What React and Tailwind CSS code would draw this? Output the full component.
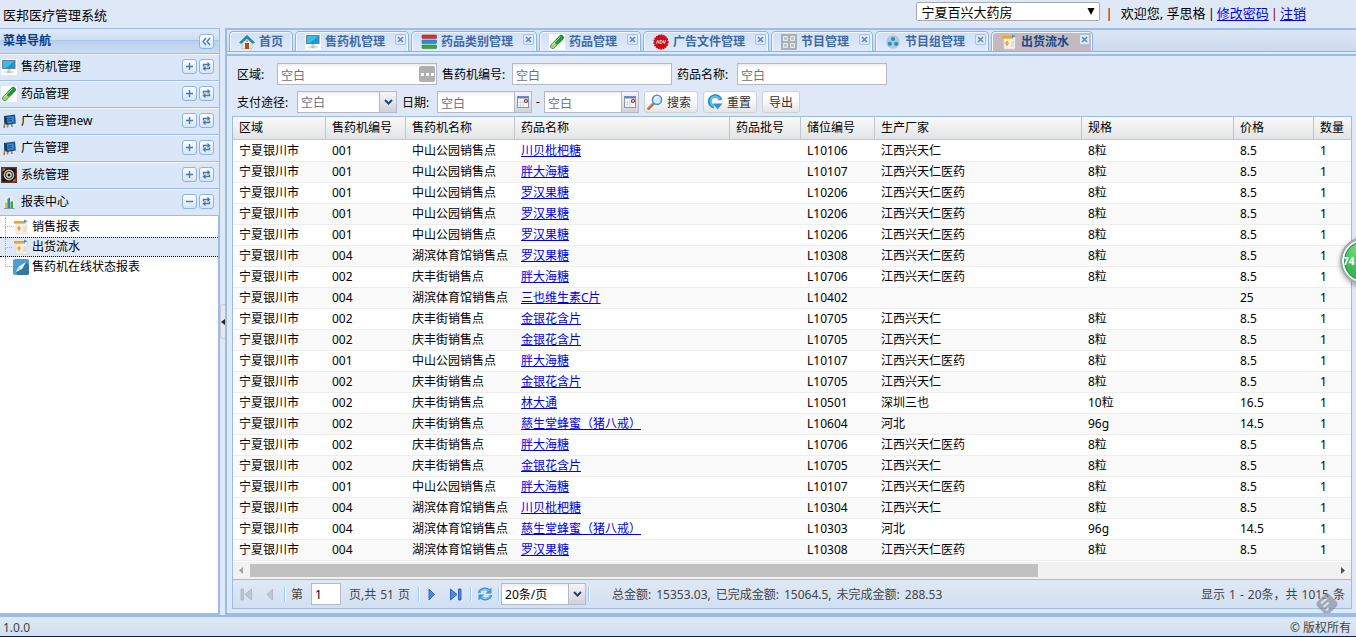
import React, { useState } from 'react';

const menus = [
  { id: 1, name: '售药机管理', icon: 'monitor' },
  { id: 2, name: '药品管理', icon: 'pill' },
  { id: 3, name: '广告管理new', icon: 'board' },
  { id: 4, name: '广告管理', icon: 'board' },
  { id: 5, name: '系统管理', icon: 'gear' },
  { id: 6, name: '报表中心', icon: 'chart', open: true },
];

const reports = [
  { name: '销售报表', icon: 'report' },
  { name: '出货流水', icon: 'report' },
  { name: '售药机在线状态报表', icon: 'pen' },
];

const tabs = [
  { name: '首页', icon: 'home', fixed: true },
  { name: '售药机管理', icon: 'monitor' },
  { name: '药品类别管理', icon: 'bars' },
  { name: '药品管理', icon: 'pill' },
  { name: '广告文件管理', icon: 'adv' },
  { name: '节目管理', icon: 'blocks' },
  { name: '节目组管理', icon: 'group' },
  { name: '出货流水', icon: 'report' },
];

const columns = [
  { title: '区域', width: 'w-[93px]' },
  { title: '售药机编号', width: 'w-[80px]' },
  { title: '售药机名称', width: 'w-[109px]' },
  { title: '药品名称', width: 'w-[215px]' },
  { title: '药品批号', width: 'w-[71px]' },
  { title: '储位编号', width: 'w-[74px]' },
  { title: '生产厂家', width: 'w-[207px]' },
  { title: '规格', width: 'w-[152px]' },
  { title: '价格', width: 'w-[80px]' },
  { title: '数量', width: '' },
];

const machines = {
  zs: ['001', '中山公园销售点'],
  hb: ['004', '湖滨体育馆销售点'],
  qf: ['002', '庆丰街销售点'],
};

const rows = [
  ['zs', '川贝枇杷糖', 'L10106', '江西兴天仁', '8粒', '8.5'],
  ['zs', '胖大海糖', 'L10107', '江西兴天仁医药', '8粒', '8.5'],
  ['zs', '罗汉果糖', 'L10206', '江西兴天仁医药', '8粒', '8.5'],
  ['zs', '罗汉果糖', 'L10206', '江西兴天仁医药', '8粒', '8.5'],
  ['zs', '罗汉果糖', 'L10206', '江西兴天仁医药', '8粒', '8.5'],
  ['hb', '罗汉果糖', 'L10308', '江西兴天仁医药', '8粒', '8.5'],
  ['qf', '胖大海糖', 'L10706', '江西兴天仁医药', '8粒', '8.5'],
  ['hb', '三也维生素C片', 'L10402', '', '', '25'],
  ['qf', '金银花含片', 'L10705', '江西兴天仁', '8粒', '8.5'],
  ['qf', '金银花含片', 'L10705', '江西兴天仁', '8粒', '8.5'],
  ['zs', '胖大海糖', 'L10107', '江西兴天仁医药', '8粒', '8.5'],
  ['qf', '金银花含片', 'L10705', '江西兴天仁', '8粒', '8.5'],
  ['qf', '林大通', 'L10501', '深圳三也', '10粒', '16.5'],
  ['qf', '慈生堂蜂蜜（猪八戒）', 'L10604', '河北', '96g', '14.5'],
  ['qf', '胖大海糖', 'L10706', '江西兴天仁医药', '8粒', '8.5'],
  ['qf', '金银花含片', 'L10705', '江西兴天仁', '8粒', '8.5'],
  ['zs', '胖大海糖', 'L10107', '江西兴天仁医药', '8粒', '8.5'],
  ['hb', '川贝枇杷糖', 'L10304', '江西兴天仁', '8粒', '8.5'],
  ['hb', '慈生堂蜂蜜（猪八戒）', 'L10303', '河北', '96g', '14.5'],
  ['hb', '罗汉果糖', 'L10308', '江西兴天仁医药', '8粒', '8.5'],
];

const Icon = ({ name }) => (
  <svg viewBox="0 0 16 16" className="w-4 h-4 shrink-0" aria-hidden="true">
    {name === 'monitor' && (
      <>
        <rect width="16" height="16" fill="#fdfdfd" />
        <rect x="1" y="1" width="13.5" height="9" rx="0.5" fill="#6d7d8c" />
        <rect x="2" y="2" width="11.5" height="7" fill="#139bd8" />
        <path d="M2 2h11.5L5 9H2z" fill="#35bdec" />
        <rect x="6.5" y="10" width="3" height="2" fill="#c9ced2" />
        <ellipse cx="8" cy="13" rx="5" ry="1.5" fill="#dfe3e6" />
        <ellipse cx="8" cy="13" rx="2" ry="0.8" fill="#a9afb5" />
      </>
    )}
    {name === 'pill' && (
      <>
        <rect width="16" height="16" fill="#fdfdfd" />
        <path d="M3.8 12.2l8.4-8.6" stroke="#2f6d25" strokeWidth="5.2" strokeLinecap="round" />
        <path d="M3.8 12.2L8 8" stroke="#a9cf7c" strokeWidth="4.2" strokeLinecap="round" />
        <path d="M8 8l4.2-4.400" stroke="#1f9a35" strokeWidth="4.600" strokeLinecap="round" />
        <path d="M3.4 10.8l7.600-7.800" stroke="#c9f3c9" strokeWidth="0.800" strokeLinecap="round" />
      </>
    )}
    {name === 'board' && (
      <>
        <path d="M4 10l-1 5M7 10l-.5 4.500M10.500 10l.5 4" stroke="#b77a35" strokeWidth="1.600" />
        <path d="M3 3l11-1.500.8 9-9 1.500L3.500 10z" fill="#1c4f8c" />
        <path d="M6 4l6.500-.8.500 6-6.300 1z" fill="#3e8ed0" />
        <path d="M3 3l2.500 1 .7 6.500-2.700 0z" fill="#163a69" />
        <path d="M7 6l4-.5M7 8l4-.5" stroke="#173d6d" strokeWidth="0.900" />
      </>
    )}
    {name === 'gear' && (
      <>
        <rect width="16" height="16" y="0" fill="#6a3520" />
        <rect x="1.500" y="1.500" width="13" height="13" fill="#15120f" />
        <circle cx="8" cy="8" r="4.600" fill="none" stroke="#c5bdb2" strokeWidth="1.600" />
        <circle cx="8" cy="8" r="2.200" fill="none" stroke="#e5ded5" strokeWidth="1.400" />
        <path d="M1.500 1.500l3.500 0-3.500 3.500zM14.500 14.500l-3.500 0 3.500-3.500z" fill="#b98358" />
      </>
    )}
    {name === 'chart' && (
      <>
        <path d="M3 2h8l2 2v10H3z" fill="#e4ebf2" />
        <path d="M4 14V9l2.500-1v6z" fill="#f2b52c" />
        <path d="M6.500 14V5L9 3.500V14z" fill="#1c87c9" />
        <path d="M9.500 14V8l2.500-1v7z" fill="#45a236" />
        <path d="M3 14.500h10.500" stroke="#6c7f92" strokeWidth="0.800" />
      </>
    )}
    {name === 'report' && (
      <>
        <path d="M3 3h11v12H3z" fill="#f4f1ec" stroke="#dad6cf" strokeWidth="0.600" />
        <rect x="1" y="2" width="11" height="2.600" fill="#f3a024" />
        <path d="M11 0.500l3.500 1.700L11 4z" fill="#3e9cc4" />
        <path d="M4 9l2-2.600L8 9l-2 3.500z" fill="#f0a52c" />
        <path d="M10 8h3M10 10h3M10 12h3" stroke="#ccc7bf" strokeWidth="0.800" />
      </>
    )}
    {name === 'pen' && (
      <>
        <rect width="16" height="16" rx="2" fill="#4a9fd0" />
        <path d="M13 3l3 3v8a2 2 0 0 1-2 2H5l-2-3z" fill="#35789f" />
        <path d="M3 13l2.500-5L13 3 9 10z" fill="#fff" />
        <path d="M5 9l3 2" stroke="#4a9fd0" strokeWidth="0.800" />
      </>
    )}
    {name === 'home' && (
      <>
        <path d="M3 8v6.500h10V8L8 3.500z" fill="#eee6d8" stroke="#b9aa94" strokeWidth="0.500" />
        <path d="M0.500 8.500L8 1.200l7.500 7.300-1.700 1L8 4.600 2.200 9.500z" fill="#1c8fb4" stroke="#106a8c" strokeWidth="0.500" />
        <rect x="6" y="9" width="4" height="6" fill="#a4541c" />
        <circle cx="8" cy="7.200" r="0.900" fill="#b98b5a" />
      </>
    )}
    {name === 'bars' && (
      <>
        <rect x="1" y="1" width="14.500" height="3.400" rx="0.500" fill="#d9302c" stroke="#8d1512" strokeWidth="0.500" />
        <rect x="1" y="6" width="14.500" height="3.400" rx="0.500" fill="#2b93d6" stroke="#12588b" strokeWidth="0.500" />
        <rect x="1" y="11" width="14.500" height="3.400" rx="0.500" fill="#3aa83d" stroke="#1a691d" strokeWidth="0.500" />
      </>
    )}
    {name === 'adv' && (
      <>
        <circle cx="8" cy="8" r="6.900" fill="#cf0d12" />
        <circle cx="8" cy="8" r="7" fill="none" stroke="#cf0d12" strokeWidth="1.400" strokeDasharray="1.500 1" />
        <path d="M3.500 9.500l1.200-3.300 1.200 3.300M7 6.300v3.200c2 0 2.300-.6 2.300-1.600S8.500 6.300 7 6.300M10.200 6.300l1.100 3.200 1.200-3.200" fill="none" stroke="#fff" strokeWidth="0.900" />
      </>
    )}
    {name === 'blocks' && (
      <>
        <rect width="16" height="16" rx="1" fill="#a7b0b8" />
        <path d="M2.500 2.500h4v4h-4zM9.500 2.500h4v4h-4zM2.500 9.500h4v4h-4zM9.500 9.500h4v4h-4z" fill="#bcc4ca" stroke="#e7ebee" strokeWidth="1" />
      </>
    )}
    {name === 'group' && (
      <>
        <circle cx="8" cy="8" r="6.800" fill="#b8c6d2" />
        <circle cx="8" cy="5" r="2.100" fill="#1594dc" />
        <circle cx="4.800" cy="9.800" r="2.100" fill="#1594dc" />
        <circle cx="11.200" cy="9.800" r="2.100" fill="#1594dc" />
      </>
    )}
    {name === 'search' && (
      <>
        <path d="M1.500 14.500l5-5" stroke="#b5622e" strokeWidth="2.600" strokeLinecap="round" />
        <path d="M1.500 14l5-5" stroke="#eda667" strokeWidth="0.900" strokeLinecap="round" />
        <circle cx="10" cy="5.800" r="4.600" fill="#cfeafd" stroke="#3f82c9" strokeWidth="1.300" />
        <path d="M7.500 5.500a2.800 2.800 0 0 1 3-2.300" fill="none" stroke="#fff" strokeWidth="1.300" />
      </>
    )}
    {name === 'reset' && (
      <>
        <path d="M13.500 6A5.500 5.500 0 1 0 7 12.800" fill="none" stroke="#1f86cf" strokeWidth="3.600" />
        <path d="M13 5.500A5 5 0 1 0 7 12.300" fill="none" stroke="#5cc1f2" strokeWidth="1.800" />
        <path d="M6 9.500h9.500L10.500 15.500z" fill="#2a92dc" />
      </>
    )}
    {name === 'refresh' && (
      <>
        <path d="M2 7C3 2.800 9 1.500 12 4.500" fill="none" stroke="#3b93d8" strokeWidth="2.600" />
        <path d="M14.500 1.500v6H8.500z" fill="#3b93d8" />
        <path d="M2.500 6.500C4 3.500 9 2 12 5" fill="none" stroke="#a5d6f7" strokeWidth="0.900" />
        <path d="M14 9c-1 4.200-7 5.500-10 2.500" fill="none" stroke="#3b93d8" strokeWidth="2.600" />
        <path d="M1.500 14.500v-6h6z" fill="#3b93d8" />
        <path d="M13.500 9.500c-1.500 3-6.500 4.500-9.500 1.500" fill="none" stroke="#a5d6f7" strokeWidth="0.900" />
      </>
    )}
  </svg>
);

const ToolButton = ({ type, label }) => (
  <button
    type="button"
    aria-label={label}
    className="w-[15px] h-[15px] flex items-center justify-center rounded-[3px] border border-[#8db4e2] bg-gradient-to-b from-white to-[#d5e5f8]"
  >
    <svg viewBox="0 0 11 11" className="w-[11px] h-[11px]" fill="none" stroke="#4a78b0" strokeWidth="1.4">
      {type === 'plus' && <path d="M5.500 2v7M2 5.500h7" />}
      {type === 'minus' && <path d="M2 5.500h7" />}
      {type === 'refresh' && (
        <>
          <path d="M2.500 5.500V3.500h5M8.500 5.500v2h-5" />
          <path d="M6.500 0.800v5.400l3-2.700zM4.500 4.800v5.400l-3-2.700z" fill="#4a78b0" stroke="none" />
        </>
      )}
      {type === 'collapse' && <path d="M5 2L2 5.500 5 9M9 2L6 5.500 9 9" strokeWidth="1.300" />}
    </svg>
  </button>
);

const Sidebar = () => (
  <div className="w-[220px] shrink-0 flex flex-col border-r border-b-2 border-[#99bce8] bg-white">
    <div className="h-[26px] shrink-0 flex items-center justify-between pl-[3px] pr-[5px] border-y border-[#99bce8] bg-[linear-gradient(#dfeaf8,#cddef3_45%,#abc7ec_46%,#abc7ec_50%,#b8cfee_51%,#cbddf3)]">
      <span className="font-bold text-[#04408c]">菜单导航</span>
      <ToolButton type="collapse" label="收起" />
    </div>
    {menus.map((item) => (
      <div
        key={item.id}
        className="h-[27px] shrink-0 flex items-center gap-1 pl-px pr-[5px] pb-[2px] border-t border-t-[#f3f7fb] border-b border-b-[#99bce8] bg-[#d9e7f8]"
      >
        <Icon name={item.icon} />
        <span className="flex-1">{item.name}</span>
        <div className="flex gap-[2px]">
          <ToolButton type={item.open ? 'minus' : 'plus'} label={item.open ? '折叠' : '展开'} />
          <ToolButton type="refresh" label="刷新" />
        </div>
      </div>
    ))}
    <ul className="flex-1 pt-px border-r border-[#99bce8]">
      {reports.map((item, i) => (
        <li
          key={item.name}
          className={`h-5 flex items-center ${i === 1 ? 'bg-[#dfe8f6] border-y border-dotted border-black' : ''}`}
        >
          <span className="w-[13px] h-full pl-[5px] flex flex-col">
            <span className="h-[10px] w-[7px] border-l border-b border-dotted border-[#b0b0b0]"></span>
            {i < 2 && <span className="flex-1 w-[7px] border-l border-dotted border-[#b0b0b0]"></span>}
          </span>
          <Icon name={item.icon} />
          <a href="#" className="pl-[3px]">{item.name}</a>
        </li>
      ))}
    </ul>
  </div>
);

const TabBar = ({ active, setActive }) => (
  <div className="shrink-0 bg-[#deebfb]">
    <div className="h-[22px] flex gap-[2px] pl-[2px] pt-px border-b border-[#8db2e3] bg-gradient-to-b from-[#dde8f5] to-[#cbdbee]">
      {tabs.map((tab, i) => (
        <div
          key={tab.name}
          className={`relative h-[21px] flex items-center pl-[9px] rounded-t-[4px] border border-[#8db2e3] shadow-[inset_1px_1px_0_#f2f7fd,inset_-1px_0_0_#f2f7fd] ${tab.fixed ? 'pr-[9px]' : 'pr-[23px]'} ${i === active ? 'bg-[#c3b9bf]' : 'bg-gradient-to-b from-[#cfe0f6] to-[#deebfc]'}`}
        >
          <button
            type="button"
            onClick={() => setActive(i)}
            className={`flex items-center gap-1 font-bold whitespace-nowrap ${i === active ? 'text-[#15498b]' : 'text-[#416aa3]'}`}
          >
            <Icon name={tab.icon} />
            {tab.name}
          </button>
          {!tab.fixed && (
            <button
              type="button"
              aria-label="关闭"
              className="absolute top-[2px] right-[2px] w-[11px] h-[11px] flex items-center justify-center rounded-[2px] border border-[#a8c3e6] bg-[#dfeaf8]"
            >
              <svg viewBox="0 0 7 7" className="w-[7px] h-[7px]" stroke="#6587b5" strokeWidth="1.600">
                <path d="M1 1l5 5M6 1L1 6" />
              </svg>
            </button>
          )}
        </div>
      ))}
    </div>
    <div className="h-[2px]"></div>
  </div>
);

const inputClass =
  'h-[22px] px-[3px] pt-[2px] border border-[#b5b8c8] bg-[linear-gradient(#ececec,#fff_4px)] text-gray-700 placeholder:text-gray-500 outline-none';

const triggerClass =
  'w-[17px] flex items-center justify-center border-l border-[#b5b8c8] bg-gradient-to-b from-[#f6f6f7] to-[#cfd2d8]';

const Chevron = () => (
  <svg viewBox="0 0 9 6" className="w-[9px] h-[6px]" fill="none" stroke="#22457f" strokeWidth="2">
    <path d="M1 1l3.500 3.500L8 1" />
  </svg>
);

const DateField = ({ id, label }) => (
  <div className="relative w-[95px]">
    <input id={id} type="text" placeholder="空白" aria-label={label} className={`${inputClass} w-full pr-5`} />
    <button type="button" aria-label="选择日期" className={`${triggerClass} absolute top-px right-px h-5`}>
      <svg viewBox="0 0 12 12" className="w-3 h-3">
        <rect x="0.500" y="0.500" width="11" height="11" fill="#fff" stroke="#7f97b8" />
        <rect x="0.500" y="0.500" width="11" height="2" fill="#5f83b8" />
        <path d="M3.500 4v7M6 4v7M1 6.500h7M1 9h7" stroke="#c9d1dc" strokeWidth="0.800" />
        <circle cx="9" cy="5" r="1.500" fill="#fff" stroke="#a81818" strokeWidth="1.200" />
      </svg>
    </button>
  </div>
);

const filterButton =
  'h-[22px] flex items-center gap-1 rounded-[3px] border border-[#d1d1d1] bg-gradient-to-b from-white via-[#f9f9f9] to-[#e4e4e4] text-[#333]';

const Filters = () => (
  <form
    className="shrink-0 pl-[5px] pt-[7px] pb-[3px] flex flex-col gap-[6px] [&_label]:pt-[2px]"
    onSubmit={(e) => e.preventDefault()}
  >
    <div className="flex items-center">
      <label htmlFor="area" className="w-10">区域:</label>
      <div className="relative w-40 mr-[5px]">
        <input id="area" type="text" placeholder="空白" className={`${inputClass} w-full pr-5`} />
        <button type="button" aria-label="选择区域" className="absolute top-[3px] right-[2px] w-4 h-4 flex items-center justify-center gap-[2px] rounded-[2px] bg-[#b0b0b0]">
          <span className="w-[3px] h-[3px] bg-white"></span>
          <span className="w-[3px] h-[3px] bg-white"></span>
          <span className="w-[3px] h-[3px] bg-white"></span>
        </button>
      </div>
      <label htmlFor="code" className="w-[70px]">售药机编号:</label>
      <input id="code" type="text" placeholder="空白" className={`${inputClass} w-40 mr-[5px]`} />
      <label htmlFor="drug" className="w-[60px]">药品名称:</label>
      <input id="drug" type="text" placeholder="空白" className={`${inputClass} w-[150px]`} />
    </div>
    <div className="flex items-center">
      <label htmlFor="pay" className="w-[60px]">支付途径:</label>
      <div className="relative w-[100px] mr-[5px]">
        <select id="pay" className="appearance-none w-full h-[22px] px-[3px] pt-[2px] border border-[#b5b8c8] bg-[linear-gradient(#ececec,#fff_4px)] text-gray-500 outline-none">
          <option>空白</option>
        </select>
        <span className={`${triggerClass} absolute top-px right-px h-5 pointer-events-none`}>
          <Chevron />
        </span>
      </div>
      <label htmlFor="start" className="w-[35px]">日期:</label>
      <DateField id="start" label="开始日期" />
      <span className="w-3 text-center">-</span>
      <DateField id="end" label="结束日期" />
      <div className="flex gap-[5px] pl-[5px]">
        <button type="submit" className={`${filterButton} pl-[2px] pr-[6px]`}>
          <Icon name="search" />
          <span className="pt-[2px]">搜索</span>
        </button>
        <button type="reset" className={`${filterButton} pl-[3px] pr-[5px]`}>
          <Icon name="reset" />
          <span className="pt-[2px]">重置</span>
        </button>
        <button type="button" className={`${filterButton} px-[6px]`}>
          <span className="pt-[2px]">导出</span>
        </button>
      </div>
    </div>
  </form>
);

const Separator = () => <span className="w-[2px] h-[14px] border-l border-[#98c8ff] bg-white"></span>;

const PageButton = ({ path, label, disabled }) => (
  <button type="button" aria-label={label} disabled={disabled} className="w-[23px] h-[22px] flex items-center justify-center">
    <svg
      viewBox="0 0 13 13"
      className="w-[13px] h-[13px]"
      fill={disabled ? '#bcc8d6' : '#4d8ae6'}
      stroke={disabled ? '#a9b4c2' : '#1f4fb0'}
      strokeWidth="0.800"
    >
      <path d={path} />
    </svg>
  </button>
);

const Pager = ({ page, setPage }) => (
  <div className="h-[29px] shrink-0 flex items-center px-[2px] border-t border-[#99bce8] bg-gradient-to-b from-[#dfe9f5] to-[#d2e0f2] text-[#444]">
    <PageButton label="首页" disabled path="M1 1h2.500v11H1zM11.500 1v11L5 6.500z" />
    <PageButton label="上一页" disabled path="M9.500 1v11L4 6.500z" />
    <span className="w-[3px]"></span>
    <Separator />
    <label htmlFor="page" className="pl-[5px] pr-2 pt-[2px]">第</label>
    <input
      id="page"
      type="text"
      value={page}
      onChange={(e) => setPage(e.target.value)}
      className="w-[30px] h-[22px] px-[3px] border border-[#b5b8c8] bg-white text-black outline-none"
    />
    <span className="w-[77px] pl-2 pt-[2px] flex gap-1 whitespace-nowrap">
      <span>页,共</span>
      <span>51</span>
      <span>页</span>
    </span>
    <Separator />
    <PageButton label="下一页" path="M4 1v11l5.500-5.500z" />
    <span className="w-px"></span>
    <PageButton label="末页" path="M1.500 1v11L8 6.500zM9.500 1H12v11H9.500z" />
    <span className="w-[3px]"></span>
    <Separator />
    <button type="button" aria-label="刷新" className="w-[26px] flex justify-center">
      <Icon name="refresh" />
    </button>
    <Separator />
    <div className="relative w-[85px] ml-px mr-[2px]">
      <select aria-label="每页条数" className="appearance-none w-full h-[22px] px-[3px] pt-[2px] border border-[#b5b8c8] bg-[linear-gradient(#ececec,#fff_4px)] text-black outline-none">
        <option>20条/页</option>
      </select>
      <span className={`${triggerClass} absolute top-px right-px h-5 pointer-events-none`}>
        <Chevron />
      </span>
    </div>
    <Separator />
    <div className="pl-[22px] pt-[2px] flex gap-[5px] whitespace-nowrap">
      <span>总金额:</span>
      <span>15353.03,</span>
      <span>已完成金额:</span>
      <span>15064.5,</span>
      <span>未完成金额:</span>
      <span>288.53</span>
    </div>
    <div className="ml-auto pr-1 pt-[2px] flex gap-1 whitespace-nowrap">
      <span>显示</span>
      <span>1</span>
      <span>-</span>
      <span>20条，共</span>
      <span>1015</span>
      <span>条</span>
    </div>
  </div>
);

const SalesTable = () => (
  <div className="flex-1 min-h-0 overflow-hidden bg-white">
    <table className="w-full table-fixed border-separate border-spacing-0">
      <thead>
        <tr>
          {columns.map((col) => (
            <th
              key={col.title}
              className={`${col.width} h-[23px] p-0 pl-[6px] text-left font-normal whitespace-nowrap border-b border-[#c5c5c5] bg-gradient-to-b from-[#f9f9f9] to-[#e3e4e6] [&:not(:last-child)]:border-r`}
            >
              {col.title}
            </th>
          ))}
        </tr>
      </thead>
      <tbody>
        {rows.map(([machine, drug, slot, factory, spec, price], i) => (
          <tr
            key={i}
            className={`[&>td]:p-0 [&>td]:pl-[6px] [&>td]:whitespace-nowrap [&>td]:border-b [&>td]:border-[#ededed] ${i === 0 ? '[&>td]:h-[22px]' : '[&>td]:h-[21px]'} ${i % 2 ? 'bg-[#fafafa]' : 'bg-white'}`}
          >
            <td>宁夏银川市</td>
            <td>{machines[machine][0]}</td>
            <td>{machines[machine][1]}</td>
            <td><a href="#" className="text-[#0000ee] underline">{drug}</a></td>
            <td></td>
            <td>{slot}</td>
            <td>{factory}</td>
            <td>{spec}</td>
            <td>{price}</td>
            <td>1</td>
          </tr>
        ))}
      </tbody>
    </table>
  </div>
);

const ScrollBar = () => (
  <div className="h-[17px] shrink-0 flex items-center bg-[#f1f1f1]">
    <svg viewBox="0 0 17 17" className="w-[17px] h-[17px] shrink-0" fill="#a3a3a3">
      <path d="M10 5v7L6 8.500z" />
    </svg>
    <div className="flex-1">
      <div className="w-8/11 h-[13px] bg-[#c1c1c1]"></div>
    </div>
    <svg viewBox="0 0 17 17" className="w-[17px] h-[17px] shrink-0" fill="#505050">
      <path d="M7 5v7l4-3.500z" />
    </svg>
  </div>
);

const App = () => {
  const [active, setActive] = useState(7);
  const [page, setPage] = useState('1');

  return (
    <div className="relative h-screen flex flex-col overflow-hidden bg-[#dfe8f6] text-black text-[12px] leading-4 font-['Noto_Sans','Noto_Sans_CJK_SC',sans-serif]">
      {/* 顶部 */}
      <header className="h-7 shrink-0 flex items-start justify-between pl-[3px] pr-[50px] text-[13px]">
        <h1 className="pt-[7px]">医邦医疗管理系统</h1>
        <div className="flex items-center pt-[2px]">
          <div className="relative">
            <select aria-label="药房" className="appearance-none w-[184px] h-[19px] px-[5px] rounded-[2px] border border-[#a9a9a9] bg-white outline-none">
              <option>宁夏百兴大药房</option>
            </select>
            <svg viewBox="0 0 8 7" className="absolute top-[6px] right-[5px] w-2 h-[7px] pointer-events-none">
              <path d="M0.500 0h7L4 7z" fill="#000" />
            </svg>
          </div>
          <div className="flex gap-[2px] pl-[6px] pt-[3px]">
            <span className="text-[#800000] pr-[6px]">|</span>
            <span>欢迎您, 孚思格</span>
            <span>|</span>
            <a href="#" className="text-[#0000ee] underline underline-offset-2">修改密码</a>
            <span className="text-[#800000]">|</span>
            <a href="#" className="text-[#0000ee] underline underline-offset-2">注销</a>
          </div>
        </div>
      </header>

      <div className="flex-1 min-h-0 flex border-b-2 border-[#99bce8]">
        <Sidebar />
        <div className="w-[5px] shrink-0 flex items-center">
          <button type="button" aria-label="收起菜单" className="w-[5px] h-[35px] flex items-center rounded-l-[3px] border border-r-0 border-[#c9ccd2] bg-[#e8e8e8]">
            <svg viewBox="0 0 4 6" className="w-1 h-[6px]">
              <path d="M4 0v6L0 3z" fill="#222" />
            </svg>
          </button>
        </div>
        <main className="flex-1 min-w-0 flex flex-col border-l-2 border-y-2 border-[#99bce8]">
          <TabBar active={active} setActive={setActive} />
          <div className="flex-1 min-h-0 flex flex-col pl-[5px] pr-1 pb-1 border-t-2 border-[#99bce8] bg-[#dfe8f6]">
            <Filters />
            <div className="flex-1 min-h-0 flex flex-col border border-[#99bce8]">
              <SalesTable />
              <ScrollBar />
              <Pager page={page} setPage={setPage} />
            </div>
          </div>
        </main>
      </div>

      <footer className="h-5 shrink-0 flex items-center justify-between pl-[3px] pr-[5px] pt-[2px] border-b border-[#10203c] bg-gradient-to-b from-[#dfe9f5] to-[#d2e0f2] text-[#444]">
        <span>1.0.0</span>
        <span>© 版权所有</span>
      </footer>

      {/* 悬浮球 */}
      <div className="absolute top-[237px] -right-8 w-12 h-12 pl-px flex items-center rounded-full border-2 border-[#a5a8a8] bg-[radial-gradient(circle_at_50%_20%,#8ee58e,#35bb55_60%)] shadow-[inset_0_0_0_2px_#fff,inset_0_0_0_3px_#2a8a58,0_2px_5px_#0005] text-white text-[10px] font-bold">
        74
      </div>
      <svg viewBox="0 0 24 24" className="absolute right-[17px] bottom-[21px] w-6 h-6 opacity-60">
        <path d="M9.500 2.500a4 4 0 0 1 5 0l7 7a4 4 0 0 1 0 5L15 21H9l-6.500-6.500a4 4 0 0 1 0-5z" fill="#7c8490" />
        <path d="M6.500 11l5.500-5M9 14.500l4-3.500M11.500 18l1.500-1.500" stroke="#e5e9ee" strokeWidth="1.800" strokeLinecap="round" />
      </svg>
    </div>
  );
};

export default App;
